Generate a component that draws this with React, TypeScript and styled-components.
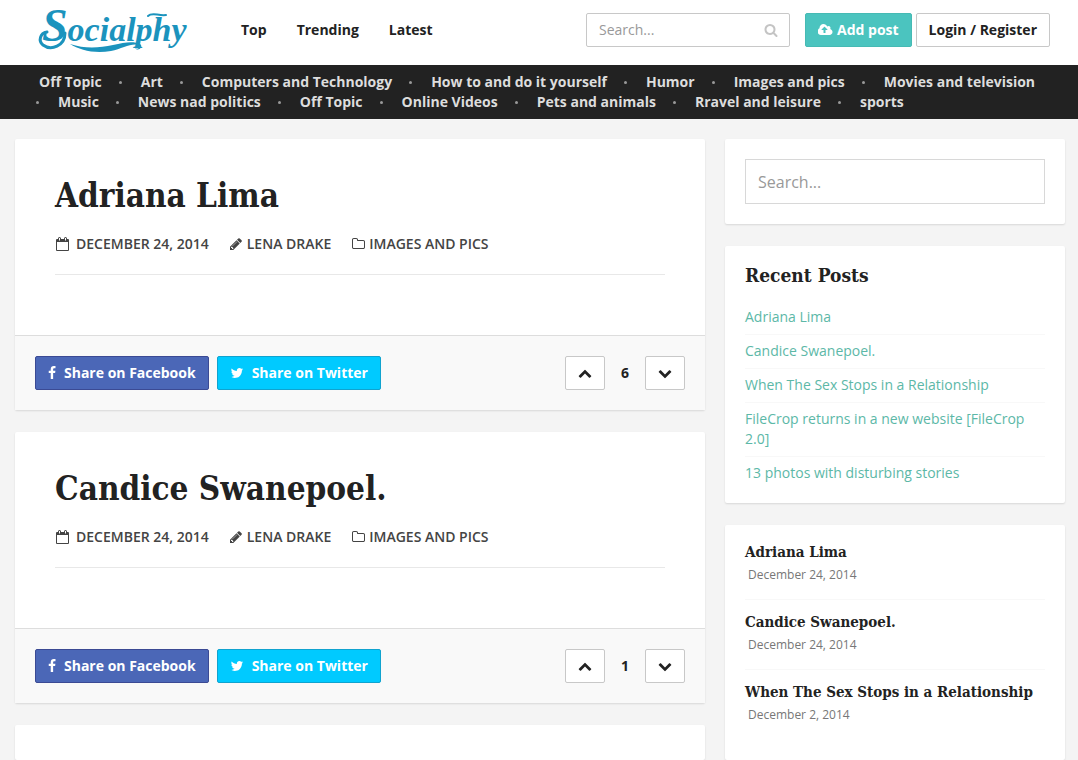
import React from "react";
import styled, { createGlobalStyle } from "styled-components";

const sans = `"Open Sans", "Noto Sans", sans-serif`;
const serif = `"DejaVu Serif Condensed", "DejaVu Serif", serif`;

const GlobalStyle = createGlobalStyle`
  *, *::before, *::after { box-sizing: border-box; }
  body {
    margin: 0;
    background: #f4f4f4;
    color: #222;
    font: 14px/20px ${sans};
  }
  a { color: inherit; text-decoration: none; }
  ul { list-style: none; margin: 0; padding: 0; }
  h2, h3, h4, p { margin: 0; }
`;

const Page = styled.div`
  min-height: 100vh;
  display: flex;
  flex-direction: column;
`;

const Header = styled.header`
  display: flex;
  align-items: center;
  height: 65px;
  padding: 0 28px 5px 35px;
  background: #fff;
`;

const LogoLink = styled.a`
  display: block;
  width: 160px;
  height: 60px;
  margin-right: 46px;
  svg { display: block; overflow: visible; }
`;

const MainNav = styled.nav`
  display: flex;
  gap: 30px;
  font-weight: 700;
  flex: 1;
`;

const SearchForm = styled.form`
  display: flex;
  align-items: center;
  width: 204px;
  height: 34px;
  margin-right: 15px;
  padding: 0 11px 0 12px;
  border: 1px solid #c8c8c8;
  border-radius: 2px;
  color: #c4c4c4;
`;

const SearchInput = styled.input`
  flex: 1;
  min-width: 0;
  padding: 0;
  border: 0;
  outline: 0;
  background: transparent;
  color: #444;
  font: 14px/20px ${sans};
  &::placeholder { color: #999; opacity: 1; }
`;

const IconButton = styled.button`
  display: flex;
  padding: 0;
  border: 0;
  background: none;
  color: inherit;
`;

type Tone = "teal" | "plain" | "facebook" | "twitter";
const tones: Record<Tone, string> = {
  teal: "background: #4bc4bf; border-color: #46bab4; color: #fff;",
  plain: "background: #fff; border-color: #c8c8c8; color: #222;",
  facebook: "background: #4b67b7; border-color: #3b4a94; color: #fff;",
  twitter: "background: #00caff; border-color: #10a3cf; color: #fff;",
};

const Button = styled.button<{ $tone: Tone; $gap?: number }>`
  display: inline-flex;
  align-items: center;
  justify-content: center;
  gap: ${(p) => p.$gap ?? 4}px;
  height: 34px;
  padding: 0 12px;
  border: 1px solid;
  border-radius: 2px;
  font: 700 14px/20px ${sans};
  white-space: nowrap;
  ${(p) => tones[p.$tone]}
`;

const HeaderActions = styled.div`
  display: flex;
  gap: 4px;
`;

const TopicBar = styled.nav`
  padding: 7px 36px;
  background: #222;
  color: #ddd;
  font-weight: 700;
`;

const TopicList = styled.ul`
  display: flex;
  flex-wrap: wrap;
  column-gap: 17px;
`;

const Topic = styled.li`
  display: flex;
  align-items: center;
  &::before {
    content: "";
    width: 3px;
    height: 3px;
    margin-right: 19px;
    border-radius: 50%;
    background: #999;
  }
  &:first-child::before { margin-right: 0; background: none; }
`;

const Content = styled.div`
  flex: 1;
  display: grid;
  grid-template-columns: minmax(0, 1fr) 340px;
  gap: 20px;
  padding: 20px 13px 0 15px;
`;

const Column = styled.div`
  display: flex;
  flex-direction: column;
  gap: 22px;
`;

const Card = styled.section<{ $grow?: boolean }>`
  background: #fff;
  border-radius: 2px;
  box-shadow: 0 1px 2px rgba(0, 0, 0, 0.12);
  ${(p) => p.$grow && "flex: 1;"}
`;

const PostBody = styled.div`
  height: 196px;
  padding: 32px 40px 0;
`;

const PostTitle = styled.h2`
  font: 700 33px/50px ${serif};
`;

const PostMeta = styled.div`
  display: flex;
  gap: 20px;
  padding: 13px 0 20px;
  border-bottom: 1px solid #e8e8e8;
  color: #444;
  font-weight: 600;
  text-transform: uppercase;
`;

const MetaItem = styled.span<{ $gap: number }>`
  display: flex;
  align-items: center;
  gap: ${(p) => p.$gap}px;
`;

const PostFooter = styled.footer`
  display: flex;
  align-items: center;
  gap: 8px;
  padding: 20px;
  border-top: 1px solid #ddd;
  background: #f9f9f9;
`;

const Votes = styled.div`
  display: grid;
  grid-template-columns: 40px 40px 40px;
  margin-left: auto;
  text-align: center;
  align-items: center;
  font-weight: 700;
`;

const SidebarCard = styled(Card)`
  padding: 0 20px;
`;

const SearchCard = styled(Card)`
  padding: 20px;
`;

const WideSearch = styled(SearchInput)`
  display: block;
  width: 100%;
  height: 45px;
  padding: 0 12px;
  border: 1px solid #d8d8d8;
  font-size: 16px;
`;

const WidgetTitle = styled.h3`
  padding: 14px 0 11px;
  font: 700 19px/30px ${serif};
`;

const RecentList = styled.ul`
  padding-bottom: 13px;
  color: #5cb8a7;
`;

const RecentItem = styled.li`
  padding: 6px 0 7px;
  border-bottom: 1px solid #f8f8f8;
  &:last-child { border-bottom: 0; }
`;

const StoryItem = styled.li`
  height: 70px;
  border-bottom: 1px solid #f8f8f8;
  &:last-child { border-bottom: 0; }
`;

const StoryList = styled.ul`
  padding-top: 5px;
`;

const StoryTitle = styled.h4`
  padding-top: 11px;
  font: 700 15px/22px ${serif};
  white-space: nowrap;
`;

const StoryDate = styled.p`
  padding: 2px 3px 0;
  color: #777;
  font-size: 12px;
  line-height: 20px;
`;

const iconPaths = {
  facebook:
    "M1343 12v264h-157q-86 0-116 36t-30 108v189h293l-39 296h-254v759h-306v-759h-255v-296h255v-218q0-186 104-288.5t277-102.5q147 0 228 12z",
  twitter:
    "M1684 408q-67 98-162 167 1 14 1 42 0 130-38 259.5t-115.5 248.5-184.5 210.5-258 146-323 54.5q-271 0-496-145 35 4 78 4 225 0 401-138-105-2-188-64.5t-114-159.5q33 5 61 5 43 0 85-11-112-23-185.5-111.5t-73.5-205.5v-4q68 38 146 41-66-44-105-115t-39-154q0-88 44-163 121 149 294.5 238.5t371.5 99.5q-8-38-8-74 0-134 94.5-228.5t228.5-94.5q140 0 236 102 109-21 205-78-37 115-142 178 93-10 186-50z",
  search:
    "M1216 832q0-185-131.5-316.5t-316.5-131.5-316.5 131.5-131.5 316.5 131.5 316.5 316.5 131.5 316.5-131.5 131.5-316.5zm512 832q0 52-38 90t-90 38q-54 0-90-38l-343-342q-179 124-399 124-143 0-273.5-55.5t-225-150-150-225-55.5-273.5 55.5-273.5 150-225 225-150 273.5-55.5 273.5 55.5 225 150 150 225 55.5 273.5q0 220-124 399l343 343q37 37 37 90z",
  folder:
    "M1600 1312v-704q0-40-28-68t-68-28h-704q-40 0-68-28t-28-68v-64q0-40-28-68t-68-28h-320q-40 0-68 28t-28 68v960q0 40 28 68t68 28h1216q40 0 68-28t28-68zm128-704v704q0 92-66 158t-158 66h-1216q-92 0-158-66t-66-158v-960q0-92 66-158t158-66h320q92 0 158 66t66 158v32h672q92 0 158 66t66 158z",
  pencil:
    "M491 1536l91-91-235-235-91 91v107h128v128h107zm523-928q0-22-22-22-10 0-17 7l-542 542q-7 7-7 17 0 22 22 22 10 0 17-7l542-542q7-7 7-17zm-54-192l416 416-832 832h-416v-416zm683 96q0 53-37 90l-166 166-416-416 166-165q36-38 90-38 53 0 91 38l235 234q37 39 37 91z",
  cloud:
    "M1216 864q0-14-9-23l-352-352q-9-9-23-9t-23 9l-351 351q-10 12-10 24 0 14 9 23t23 9h224v352q0 13 9.5 22.5t22.5 9.5h192q13 0 22.5-9.5t9.5-22.5v-352h224q13 0 22.5-9.5t9.5-22.5zm640 288q0 159-112.5 271.5t-271.5 112.5h-1088q-185 0-316.5-131.5t-131.5-316.5q0-130 70-240t188-165q-2-30-2-43 0-212 150-362t362-150q156 0 285.5 87t188.5 231q71-62 166-62 106 0 181 75t75 181q0 76-41 138 130 31 213.5 135.5t83.5 238.5z",
  up: "M1683 1331l-166 165q-19 19-45 19t-45-19l-531-531-531 531q-19 19-45 19t-45-19l-166-165q-19-19-19-45.5t19-45.5l742-741q19-19 45-19t45 19l742 741q19 19 19 45.5t-19 45.5z",
  down: "M1683 808l-742 741q-19 19-45 19t-45-19l-742-741q-19-19-19-45.5t19-45.5l166-165q19-19 45-19t45 19l531 531 531-531q19-19 45-19t45 19l166 165q19 19 19 45.5t-19 45.5z",
};

type IconProps = { name: keyof typeof iconPaths; width?: number; viewBox?: string };

const Icon = ({ name, width = 14, viewBox = "0 0 1792 1792" }: IconProps) => (
  <svg width={width} height={14} viewBox={viewBox} fill="currentColor" aria-hidden="true">
    <path d={iconPaths[name]} />
  </svg>
);

const CalendarIcon = () => (
  <svg width={15} height={16} viewBox="0 0 15 16" fill="currentColor" aria-hidden="true">
    <path fillRule="evenodd" d="M1 4Q1 3 2 3H3V2.500Q3 1 4.500 1Q6 1 6 2.500V3H9V2.500Q9 1 10.500 1Q12 1 12 2.500V3H13Q14 3 14 4V14Q14 15 13 15H2Q1 15 1 14ZM2 6V14H13V6ZM4 2V4.500H5V2ZM10 2V4.500H11V2Z" />
  </svg>
);

const Logo = () => (
  <svg width="160" height="60" viewBox="-4 -6 160 60" role="img" aria-label="Socialphy" fill="#1b93bd">
    <text x="3" y="35" fontFamily="Liberation Serif, serif" fontStyle="italic" fontWeight="700" fontSize="34">
      <tspan fontSize="46">S</tspan>ocialphy
    </text>
    <path d="M31 38C46 43 60 42 74 39C86 36 95 35 101 38C105 41 99 46 96 42C99 44 102 41 99 39C92 37 83 43 72 45C55 48 41 44 31 38Z" />
    <g fill="none" stroke="#1b93bd" strokeLinecap="round">
      <path strokeWidth="3" d="M8 26C1 27 -1 35 4 39C12 45 26 40 26 27" />
      <path strokeWidth="2" d="M109 10C113 6 119 10 127 9" />
    </g>
  </svg>
);

const topics = [
  "Off Topic", "Art", "Computers and Technology", "How to and do it yourself", "Humor",
  "Images and pics", "Movies and television", "Music", "News nad politics", "Off Topic",
  "Online Videos", "Pets and animals", "Rravel and leisure", "sports",
];

const posts = [
  { title: "Adriana Lima", votes: 6 },
  { title: "Candice Swanepoel.", votes: 1 },
];

const recent = [
  "Adriana Lima",
  "Candice Swanepoel.",
  "When The Sex Stops in a Relationship",
  "FileCrop returns in a new website [FileCrop 2.0]",
  "13 photos with disturbing stories",
];

const stories = [
  { title: "Adriana Lima", date: "December 24, 2014" },
  { title: "Candice Swanepoel.", date: "December 24, 2014" },
  { title: "When The Sex Stops in a Relationship", date: "December 2, 2014" },
];

const Post = ({ title, votes }: { title: string; votes: number }) => (
  <Card as="article">
    <PostBody>
      <PostTitle><a href="#post">{title}</a></PostTitle>
      <PostMeta>
        <MetaItem $gap={6}><CalendarIcon />December 24, 2014</MetaItem>
        <MetaItem $gap={4}><Icon name="pencil" /><a href="#author">Lena Drake</a></MetaItem>
        <MetaItem $gap={3}><Icon name="folder" width={15} /><a href="#category">Images and pics</a></MetaItem>
      </PostMeta>
    </PostBody>
    <PostFooter>
      <Button $tone="facebook" $gap={8}>
        <Icon name="facebook" width={8} viewBox="384 0 1024 1792" />Share on Facebook
      </Button>
      <Button $tone="twitter" $gap={8}><Icon name="twitter" />Share on Twitter</Button>
      <Votes>
        <Button $tone="plain" aria-label="Vote up"><Icon name="up" /></Button>
        <span>{votes}</span>
        <Button $tone="plain" aria-label="Vote down"><Icon name="down" /></Button>
      </Votes>
    </PostFooter>
  </Card>
);

export default function App() {
  return (
    <Page>
      <GlobalStyle />
      <Header>
        <LogoLink href="#home"><Logo /></LogoLink>
        <MainNav>
          <a href="#top">Top</a>
          <a href="#trending">Trending</a>
          <a href="#latest">Latest</a>
        </MainNav>
        <SearchForm>
          <SearchInput type="text" placeholder="Search..." aria-label="Search" />
          <IconButton type="button" aria-label="Submit search"><Icon name="search" /></IconButton>
        </SearchForm>
        <HeaderActions>
          <Button $tone="teal"><Icon name="cloud" width={15} viewBox="0 0 1920 1792" />Add post</Button>
          <Button $tone="plain">Login / Register</Button>
        </HeaderActions>
      </Header>
      <TopicBar>
        <TopicList>
          {topics.map((t, i) => (
            <Topic key={i}><a href="#topic">{t}</a></Topic>
          ))}
        </TopicList>
      </TopicBar>
      <Content>
        <Column as="main">
          {posts.map((p) => <Post key={p.title} {...p} />)}
          <Card $grow />
        </Column>
        <Column as="aside">
          <SearchCard>
            <WideSearch type="text" placeholder="Search..." aria-label="Search the site" />
          </SearchCard>
          <SidebarCard>
            <WidgetTitle>Recent Posts</WidgetTitle>
            <RecentList>
              {recent.map((r) => <RecentItem key={r}><a href="#post">{r}</a></RecentItem>)}
            </RecentList>
          </SidebarCard>
          <SidebarCard $grow>
            <StoryList>
              {stories.map((s) => (
                <StoryItem key={s.title}>
                  <StoryTitle><a href="#post">{s.title}</a></StoryTitle>
                  <StoryDate>{s.date}</StoryDate>
                </StoryItem>
              ))}
            </StoryList>
          </SidebarCard>
        </Column>
      </Content>
    </Page>
  );
}
